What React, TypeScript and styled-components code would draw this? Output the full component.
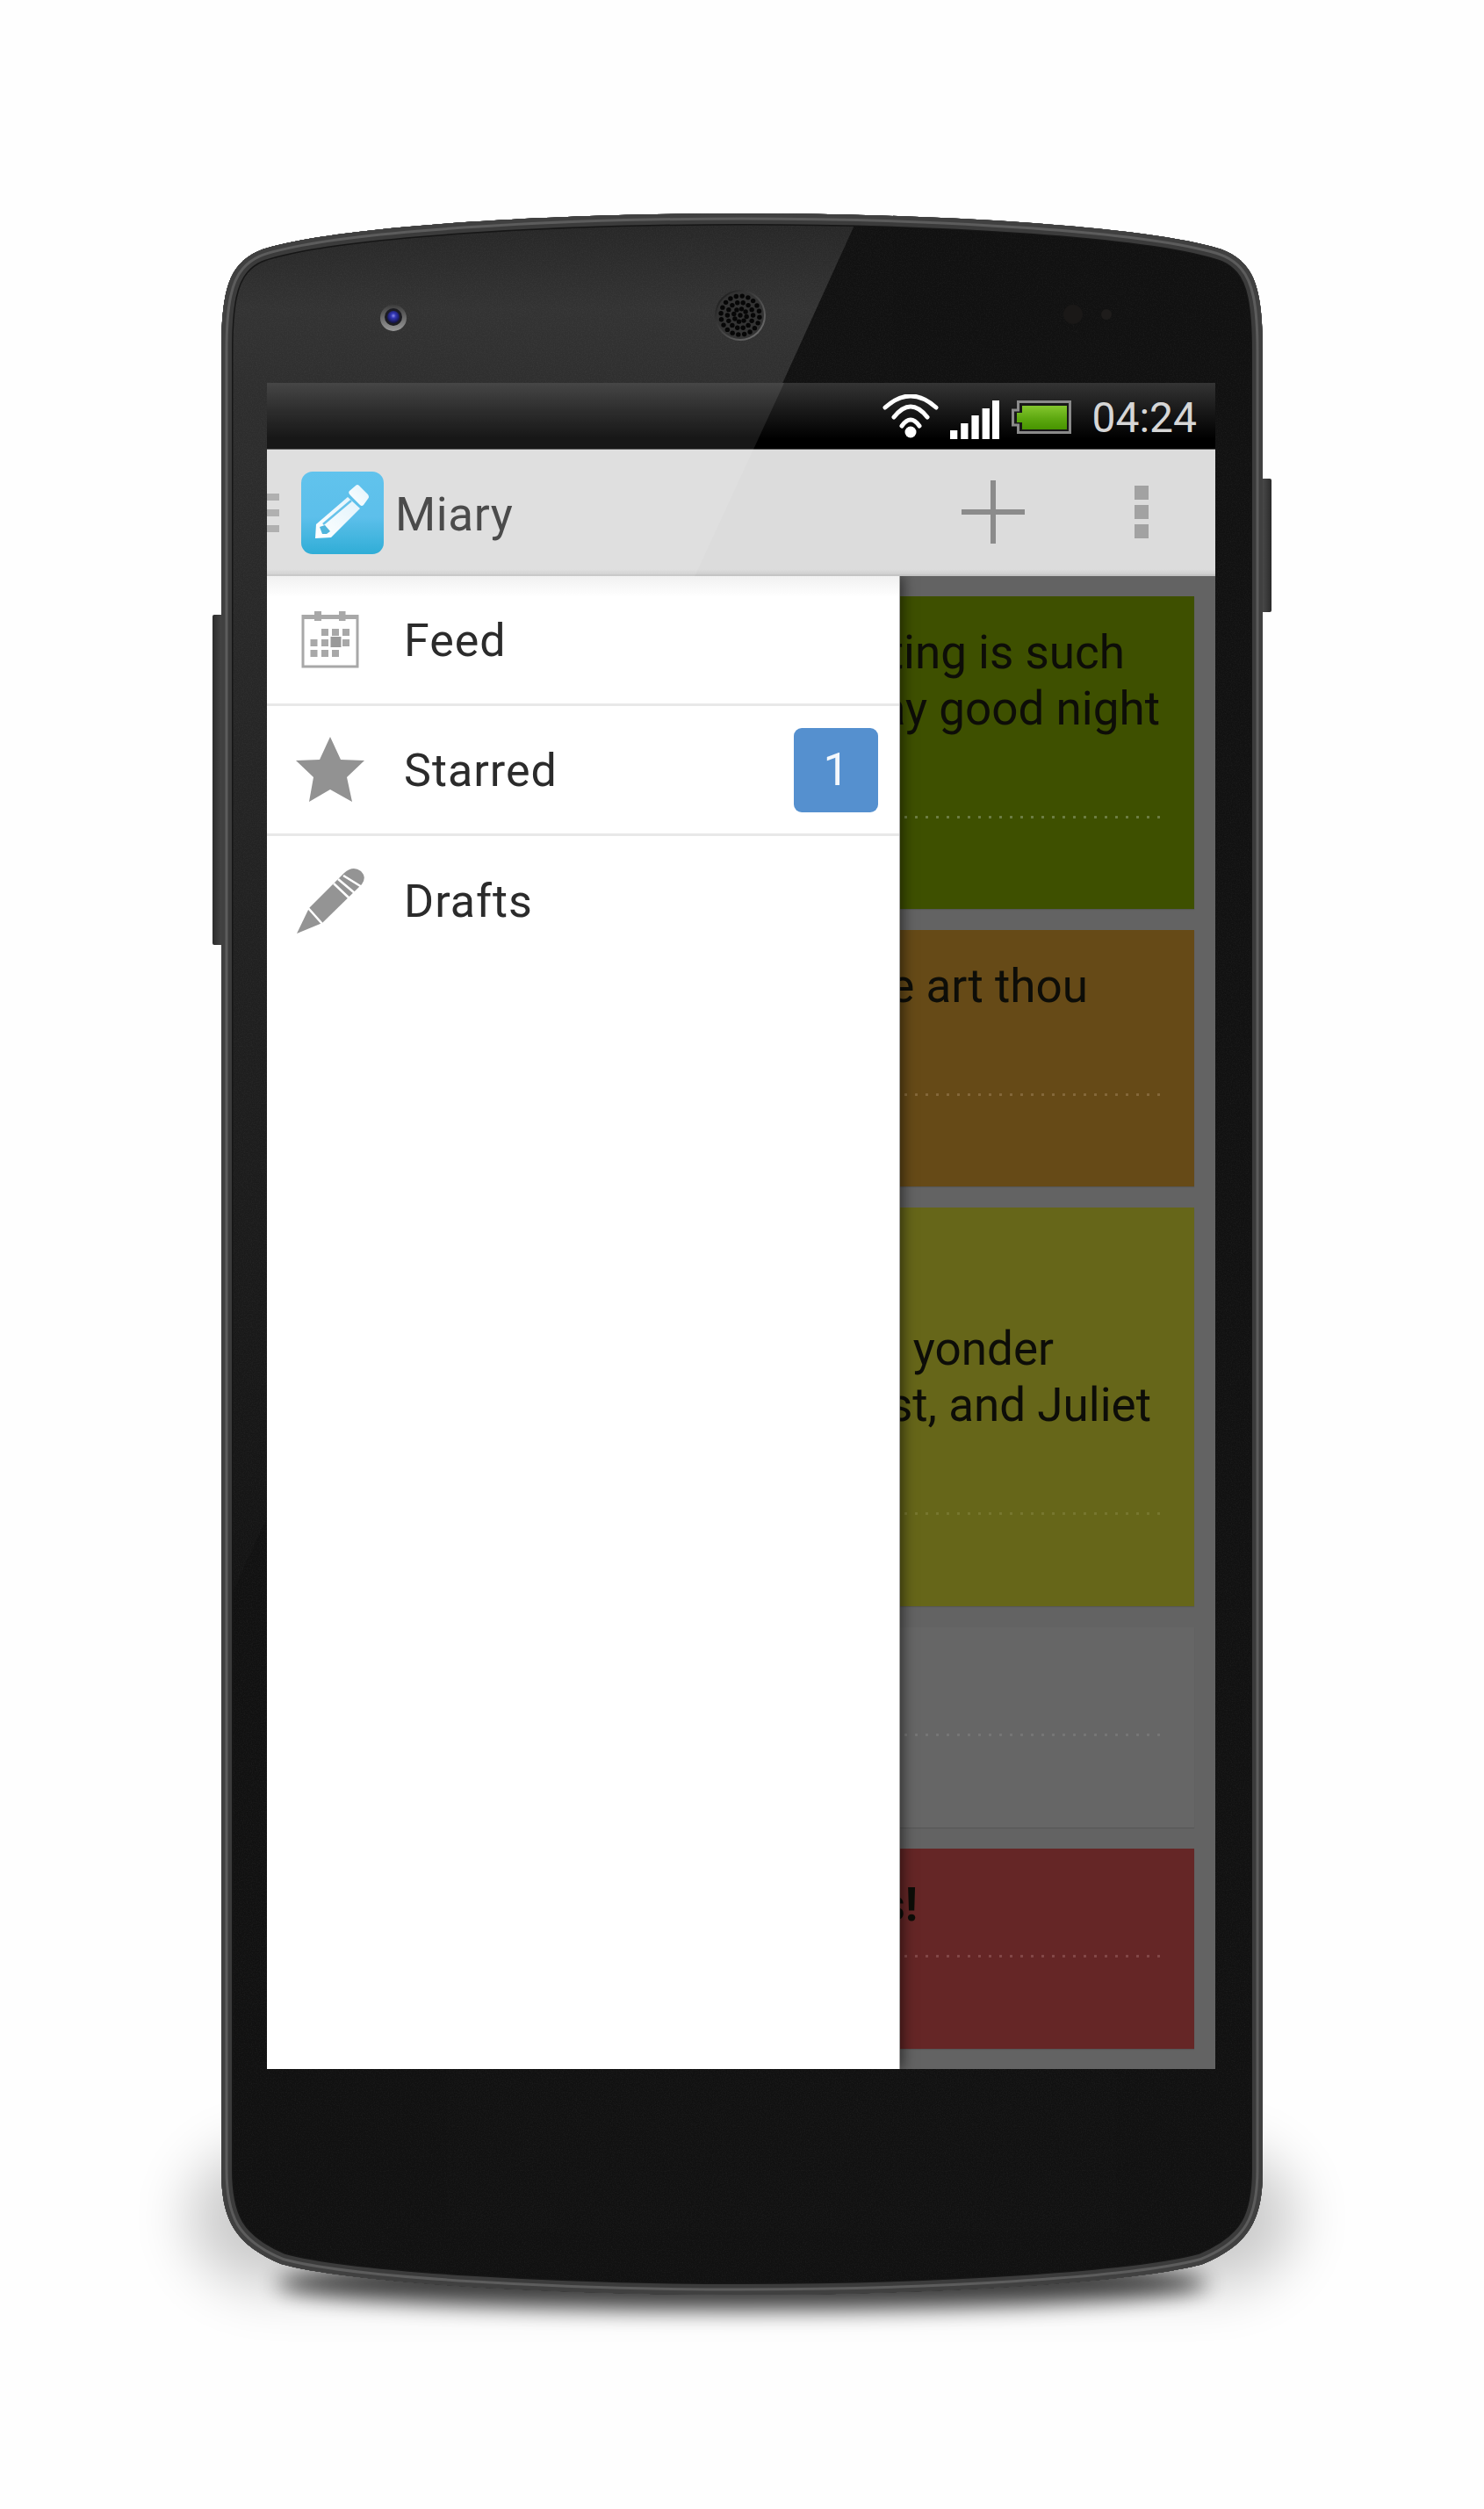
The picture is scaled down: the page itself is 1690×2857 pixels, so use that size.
import { createGlobalStyle, styled } from "styled-components";

const BODY_PATH =
  "M252 400C252 345 258 318 272 302C285 287 300 283 317 279C400 258 620 243 845 243C1070 243 1290 258 1373 279C1390 283 1405 287 1418 302C1432 318 1438 345 1438 400L1438 2470C1438 2525 1425 2555 1370 2578C1290 2600 1050 2613 845 2613C640 2613 400 2600 320 2578C265 2555 252 2525 252 2470Z";

const GlobalStyle = createGlobalStyle`
  html, body {
    margin: 0;
    padding: 0;
    background: #fefefe;
  }
  body {
    font-family: Roboto, "Liberation Sans", sans-serif;
  }
`;

const Page = styled.div`
  width: 1690px;
  height: 2857px;
  box-sizing: border-box;
  padding-top: 243px;
  display: flex;
  justify-content: center;
  align-items: flex-start;
  overflow: hidden;
`;

const Phone = styled.div`
  position: relative;
  width: 1186px;
  height: 2370px;
  box-sizing: border-box;
  padding: 193px 54px 0 52px;
`;

const Hardware = styled.svg`
  position: absolute;
  left: -252px;
  top: -243px;
  width: 1690px;
  height: 2857px;
`;

const Screen = styled.div`
  position: relative;
  width: 1080px;
  height: 1920px;
  display: flex;
  flex-direction: column;
  overflow: hidden;
  background: #636363;
`;

const Header = styled.header`
  position: relative;
  z-index: 3;
  flex: none;
`;

const Gloss = styled.div`
  position: absolute;
  inset: 0;
  background: rgba(255, 255, 255, 0.09);
  clip-path: polygon(0 0, 589px 0, 487px 221px, 0 221px);
  pointer-events: none;
`;

const StatusBar = styled.div`
  height: 76px;
  box-sizing: border-box;
  display: flex;
  align-items: flex-start;
  justify-content: flex-end;
  padding-right: 21px;
  background: linear-gradient(#343434, #1a1a1a 40%, #000 85%);
  border-bottom: 1px solid #555;
`;

const StatusIcon = styled.svg<{ $top: number; $gap: number }>`
  flex: none;
  margin-top: ${(p) => p.$top}px;
  margin-right: ${(p) => p.$gap}px;
`;

const Clock = styled.span`
  margin-top: 12px;
  font-size: 48px;
  line-height: 56px;
  font-weight: 400;
  color: #d6d6d6;
`;

const Toolbar = styled.div`
  height: 144px;
  box-sizing: border-box;
  display: flex;
  align-items: center;
  background: linear-gradient(#dcdcdc, #dcdcdc 96%, #cfcfcf);
  border-bottom: 2px solid #c4c4c4;
`;

const UpBars = styled.div`
  width: 14px;
  height: 44px;
  margin-top: 2px;
  display: flex;
  flex-direction: column;
  justify-content: space-between;
  & > i {
    display: block;
    height: 8px;
    background: #a9a9a9;
  }
`;

const AppIcon = styled.svg`
  flex: none;
  margin-left: 25px;
  margin-top: 1px;
`;

const Title = styled.h1`
  margin: 5px 0 0 13px;
  font-size: 53px;
  line-height: 60px;
  font-weight: 400;
  letter-spacing: 0.6px;
  color: #3a3a3a;
  flex: 1;
`;

const PlusIcon = styled.svg`
  flex: none;
  margin-right: 125px;
`;

const Overflow = styled.div`
  width: 16px;
  height: 60px;
  margin-right: 76px;
  display: flex;
  flex-direction: column;
  justify-content: space-between;
  & > i {
    display: block;
    height: 16px;
    background: #a2a2a2;
  }
`;

const Body = styled.div`
  position: relative;
  flex: 1;
  min-height: 0;
`;

const CardList = styled.div`
  display: flex;
  flex-direction: column;
  gap: 24px;
  padding: 23px 24px 0;
`;

const Card = styled.article<{ $bg: string; $height: number; $pad: number }>`
  height: ${(p) => p.$height}px;
  box-sizing: border-box;
  padding-top: ${(p) => p.$pad}px;
  background: ${(p) => p.$bg};
  box-shadow: 0 1px 1px rgba(0, 0, 0, 0.12);
`;

const CardLine = styled.div<{ $end: number; $bold?: boolean }>`
  height: 64px;
  padding-right: ${(p) => p.$end}px;
  text-align: right;
  white-space: nowrap;
  font-size: 53px;
  line-height: 64px;
  font-weight: ${(p) => (p.$bold ? 700 : 400)};
  color: #0d0d08;
`;

const Dots = styled.div<{ $gap: number; $color: string }>`
  height: 3px;
  margin: ${(p) => p.$gap}px 30px 0 30px;
  background-image: radial-gradient(circle at 1.5px 1.5px, ${(p) => p.$color} 1.4px, transparent 1.6px);
  background-size: 12px 3px;
  background-repeat: repeat-x;
  background-position: right 0 top 0;
`;

const Drawer = styled.nav`
  position: absolute;
  z-index: 2;
  left: 0;
  top: 0;
  bottom: 0;
  width: 720px;
  background: linear-gradient(#f1f1f1, #fff 24px);
  box-shadow: 1px 0 0 #a8a8a8, 4px 0 14px rgba(0, 0, 0, 0.55);
`;

const DrawerItem = styled.div<{ $divider?: boolean }>`
  height: 148px;
  box-sizing: border-box;
  display: flex;
  align-items: center;
  border-bottom: ${(p) => (p.$divider ? "3px solid #e8e8e8" : "none")};
`;

const ItemIcon = styled.div`
  flex: none;
  width: 156px;
  display: flex;
  justify-content: flex-start;
  padding-left: 33px;
  box-sizing: border-box;
`;

const Glyph = styled.svg<{ $shift?: number }>`
  display: block;
  margin-left: ${(p) => p.$shift ?? 0}px;
`;

const ItemLabel = styled.span`
  flex: 1;
  padding-top: 2px;
  font-size: 52px;
  line-height: 60px;
  letter-spacing: 1px;
  color: #2b2b2b;
`;

const CountBadge = styled.span`
  width: 96px;
  height: 96px;
  margin-right: 24px;
  border-radius: 9px;
  background: #5590cf;
  color: #f4f8fc;
  font-size: 52px;
  font-weight: 400;
  display: flex;
  align-items: center;
  justify-content: center;
`;

const speakerHoles: [number, number][] = [[843, 359]];
[
  [7.3, 8, 0.2],
  [14.6, 14, 0],
  [22, 20, 0.1],
].forEach(([radius, count, turn]) => {
  for (let i = 0; i < count; i++) {
    const angle = turn + (i * Math.PI * 2) / count;
    speakerHoles.push([843 + radius * Math.cos(angle), 359 + radius * Math.sin(angle)]);
  }
});

function PhoneHardware() {
  return (
    <Hardware viewBox="0 0 1690 2857" aria-hidden="true">
      <defs>
        <filter id="softShadow" x="-30%" y="-60%" width="160%" height="220%">
          <feGaussianBlur stdDeviation="32" />
        </filter>
        <filter id="tightShadow" x="-20%" y="-200%" width="140%" height="500%">
          <feGaussianBlur stdDeviation="12" />
        </filter>
        <filter id="grain" x="0" y="0" width="100%" height="100%">
          <feTurbulence type="fractalNoise" baseFrequency="0.8" numOctaves="2" seed="4" />
          <feColorMatrix values="0 0 0 0 1  0 0 0 0 1  0 0 0 0 1  0.5 0 0 0 -0.18" />
        </filter>
        <clipPath id="bodyClip">
          <path d={BODY_PATH} />
        </clipPath>
        <linearGradient id="glare" gradientUnits="userSpaceOnUse" x1="0" y1="253" x2="0" y2="1900">
          <stop offset="0" stopColor="#272727" />
          <stop offset="0.06" stopColor="#333" />
          <stop offset="0.12" stopColor="#2e2e2e" />
          <stop offset="0.45" stopColor="#222" />
          <stop offset="1" stopColor="#121212" />
        </linearGradient>
        <linearGradient id="button" x1="0" x2="1" y1="0" y2="0">
          <stop offset="0" stopColor="#2c2c2c" />
          <stop offset="1" stopColor="#4c4c4c" />
        </linearGradient>
        <linearGradient id="buttonRight" x1="0" x2="1" y1="0" y2="0">
          <stop offset="0" stopColor="#555" />
          <stop offset="1" stopColor="#2a2a2a" />
        </linearGradient>
        <linearGradient id="cameraRing" x1="0" x2="0" y1="0" y2="1">
          <stop offset="0" stopColor="#3c3c3c" />
          <stop offset="1" stopColor="#9a9a9a" />
        </linearGradient>
        <radialGradient id="lens" cx="0.5" cy="0.4" r="0.55">
          <stop offset="0" stopColor="#8c8ce8" />
          <stop offset="0.35" stopColor="#3338b8" />
          <stop offset="1" stopColor="#15154c" />
        </radialGradient>
        <linearGradient id="speakerRim" x1="0" x2="1" y1="0" y2="1">
          <stop offset="0" stopColor="#141414" />
          <stop offset="1" stopColor="#777" />
        </linearGradient>
      </defs>

      <rect x="215" y="2445" width="1260" height="160" rx="90" fill="#000" opacity="0.2" filter="url(#softShadow)" />
      <ellipse cx="845" cy="2600" rx="530" ry="30" fill="#000" opacity="0.72" filter="url(#tightShadow)" />

      <rect x="242" y="700" width="14" height="376" rx="2" fill="url(#button)" />
      <rect x="1434" y="545" width="14" height="152" rx="2" fill="url(#buttonRight)" />

      <path d={BODY_PATH} fill="#111" />
      <g clipPath="url(#bodyClip)">
        <polygon points="240,230 985,230 89,2200 240,2200" fill="url(#glare)" />
        <rect x="252" y="243" width="1186" height="2370" filter="url(#grain)" opacity="0.16" />
        <path d={BODY_PATH} fill="none" stroke="#161616" strokeWidth="27" />
        <path d={BODY_PATH} fill="none" stroke="#3b3b3b" strokeWidth="24" />
        <path d={BODY_PATH} fill="none" stroke="#5c5c5c" strokeWidth="15" />
        <path d={BODY_PATH} fill="none" stroke="#404040" strokeWidth="9" />
      </g>

      <circle cx="448" cy="362" r="15" fill="url(#cameraRing)" />
      <circle cx="448" cy="361" r="10" fill="#1c1c22" />
      <circle cx="448" cy="361" r="7" fill="url(#lens)" />

      <circle cx="843" cy="359" r="29" fill="url(#speakerRim)" />
      <circle cx="843" cy="359" r="27" fill="#333" />
      {speakerHoles.map(([x, y]) => (
        <circle key={`${x}-${y}`} cx={x} cy={y} r="2.7" fill="#060606" />
      ))}

      <circle cx="1222" cy="358" r="11" fill="#1a1817" />
      <circle cx="1260" cy="358" r="6" fill="#1e1c1b" />
    </Hardware>
  );
}

function WifiIcon() {
  return (
    <StatusIcon $top={13} $gap={13} width="64" height="50" viewBox="0 0 64 50" fill="none" stroke="#fff" strokeWidth="5" strokeLinecap="round">
      <path d="M3 15Q32 -11 61 15" />
      <path d="M13 26Q32 2 51 26" />
      <path d="M22 36Q32 22 42 36" />
      <circle cx="32" cy="43" r="6.5" fill="#fff" stroke="none" />
    </StatusIcon>
  );
}

function SignalIcon() {
  return (
    <StatusIcon $top={20} $gap={14} width="56" height="44" viewBox="0 0 56 44" fill="#fff">
      <rect x="0" y="34" width="8.3" height="10" />
      <rect x="12.2" y="26" width="8.3" height="18" />
      <rect x="24.4" y="17" width="8.3" height="27" />
      <rect x="36.6" y="9" width="8.3" height="35" />
      <rect x="48" y="0" width="8" height="44" />
    </StatusIcon>
  );
}

function BatteryIcon() {
  return (
    <StatusIcon $top={20} $gap={23} width="68" height="38" viewBox="0 0 68 38">
      <defs>
        <linearGradient id="charge" x1="0" x2="0" y1="0" y2="1">
          <stop offset="0" stopColor="#84c62e" />
          <stop offset="0.55" stopColor="#5da810" />
          <stop offset="1" stopColor="#479400" />
        </linearGradient>
      </defs>
      <path d="M7.5 1.5H66.5V36.5H7.5V28H1.5V11H7.5Z" fill="#181818" stroke="#8a8a8a" strokeWidth="3" />
      <path d="M12 6H63V33H12V25H6V14H12Z" fill="url(#charge)" />
    </StatusIcon>
  );
}

function MiaryIcon() {
  return (
    <AppIcon width="94" height="94" viewBox="0 0 94 94">
      <defs>
        <linearGradient id="appBlue" x1="0" x2="0" y1="0" y2="1">
          <stop offset="0" stopColor="#52bdec" />
          <stop offset="0.55" stopColor="#4db9e9" />
          <stop offset="1" stopColor="#1ca6d3" />
        </linearGradient>
        <linearGradient id="appPencil" x1="0" x2="1" y1="1" y2="0">
          <stop offset="0" stopColor="#ffffff" />
          <stop offset="1" stopColor="#dff3fc" />
        </linearGradient>
      </defs>
      <rect width="94" height="94" rx="13" fill="url(#appBlue)" />
      <path d="M62 16Q64 14 66 16L76 26Q78 29 76 31L71 38Q69 40 67 38L56 27Q53 24 55 22Z" fill="url(#appPencil)" />
      <path d="M53 29L67 42L34 75L16 76L17 60Z" fill="url(#appPencil)" />
      <path d="M25 60L57 33" stroke="#58bde9" strokeWidth="2.5" fill="none" />
      <path d="M21 63L27 61L33 68L29 71L24 71Z" fill="#3faed9" />
    </AppIcon>
  );
}

function CalendarIcon() {
  return (
    <Glyph $shift={6} width="66" height="65" viewBox="0 0 66 65" fill="#a8a8a8">
      <rect x="2" y="5.5" width="62" height="57.5" fill="none" stroke="#a8a8a8" strokeWidth="3" />
      <rect x="1" y="5" width="64" height="4" />
      <rect x="15" y="0" width="8" height="11" />
      <rect x="43" y="0" width="7.5" height="11" />
      {[[23, 20], [35, 20], [47, 20], [10.5, 32], [23, 32], [47, 32], [10.5, 44], [23, 44], [35, 44]].map(([x, y]) => (
        <rect key={`${x}-${y}`} x={x} y={y} width="8" height="8" />
      ))}
      <rect x="33.5" y="29" width="12" height="12" fill="#999" />
    </Glyph>
  );
}

function StarIcon() {
  return (
    <Glyph width="78" height="75" viewBox="0 0 78 75" fill="#929292">
      <polygon points="39,0 51,26 78,27 58,46 64,74 39,60 15,74 20,46 0,27 27,26" />
    </Glyph>
  );
}

function PencilIcon() {
  return (
    <Glyph width="78" height="76" viewBox="0 0 78 76">
      <path d="M1 75L15 46L55 6Q65 -3 74 4Q81 11 75 19L30 63Z" fill="#949494" />
      <path d="M14 46L30 64M43 18L61 35M48 13L67 29M54 9L75 22" stroke="#fff" strokeWidth="2.6" fill="none" />
    </Glyph>
  );
}

export default function App() {
  return (
    <Page>
      <GlobalStyle />
      <Phone>
        <PhoneHardware />
        <Screen>
          <Header>
            <StatusBar>
              <WifiIcon />
              <SignalIcon />
              <BatteryIcon />
              <Clock>04:24</Clock>
            </StatusBar>
            <Toolbar>
              <UpBars>
                <i />
                <i />
                <i />
              </UpBars>
              <MiaryIcon />
              <Title>Miary</Title>
              <PlusIcon width="72" height="72" viewBox="0 0 72 72" stroke="#8b8b8b" strokeWidth="6">
                <path d="M0 36H72M36 0V72" />
              </PlusIcon>
              <Overflow>
                <i />
                <i />
                <i />
              </Overflow>
            </Toolbar>
            <Gloss />
          </Header>
          <Body>
            <CardList>
              <Card $bg="#3e5000" $height={356} $pad={32}>
                <CardLine $end={79}>Parting is such</CardLine>
                <CardLine $end={39}>say good night</CardLine>
                <Dots $gap={90} $color="#6d7d44" />
              </Card>
              <Card $bg="#664a17" $height={292} $pad={32}>
                <CardLine $end={121}>wherefore art thou</CardLine>
                <Dots $gap={90} $color="#84683a" />
              </Card>
              <Card $bg="#666619" $height={454} $pad={129}>
                <CardLine $end={160}>through yonder</CardLine>
                <CardLine $end={49}>the East, and Juliet</CardLine>
                <Dots $gap={90} $color="#77772f" />
              </Card>
              <Card $bg="#666666" $height={228} $pad={121}>
                <Dots $gap={0} $color="#767676" />
              </Card>
              <Card $bg="#652626" $height={228} $pad={32}>
                <CardLine $end={315} $bold>sorrows!</CardLine>
                <Dots $gap={25} $color="#834848" />
              </Card>
            </CardList>
            <Drawer>
              <DrawerItem $divider>
                <ItemIcon>
                  <CalendarIcon />
                </ItemIcon>
                <ItemLabel>Feed</ItemLabel>
              </DrawerItem>
              <DrawerItem $divider>
                <ItemIcon>
                  <StarIcon />
                </ItemIcon>
                <ItemLabel>Starred</ItemLabel>
                <CountBadge>1</CountBadge>
              </DrawerItem>
              <DrawerItem>
                <ItemIcon>
                  <PencilIcon />
                </ItemIcon>
                <ItemLabel>Drafts</ItemLabel>
              </DrawerItem>
            </Drawer>
          </Body>
        </Screen>
      </Phone>
    </Page>
  );
}
